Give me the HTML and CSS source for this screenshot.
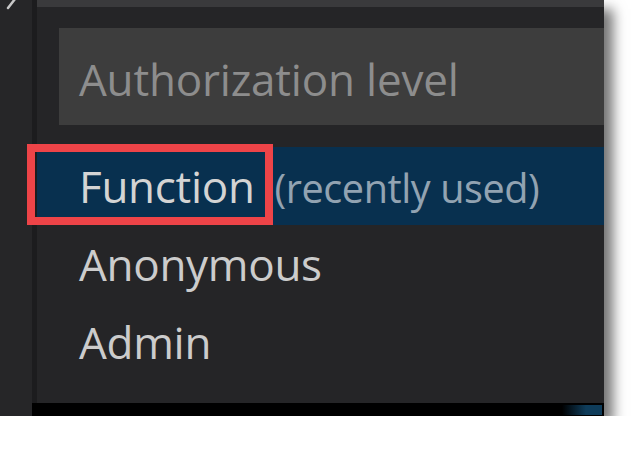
FILE: index.html
```html
<!DOCTYPE html>
<html>
<head>
<meta charset="utf-8">
<link rel="stylesheet" href="styles.css">
</head>
<body>
<div class="shot">
  <div class="editor">
    <svg class="glyph" width="20" height="10" viewBox="0 0 20 10"><line x1="15" y1="-1" x2="8" y2="8" stroke="#c8c8c8" stroke-width="2.5" stroke-linecap="round"/></svg>
  </div>
  <div class="right">
    <div class="main">
      <div class="edge"></div>
      <div class="widget">
        <div class="topbar"></div>
        <div class="body">
          <div class="input">Authorization level</div>
          <ul class="list">
            <li class="item active"><span class="label">Function</span><span class="desc">(recently used)</span></li>
            <li class="item"><span class="label">Anonymous</span></li>
            <li class="item"><span class="label">Admin</span></li>
          </ul>
        </div>
      </div>
    </div>
    <div class="statusbar"><div class="blue"></div></div>
  </div>
  <div class="highlight"></div>
</div>
</body>
</html>
```
FILE: styles.css
```css
html, body {
  margin: 0;
  padding: 0;
  background: #ffffff;
}
.shot {
  position: relative;
  width: 604px;
  height: 416px;
  display: flex;
  background: #262628;
  box-shadow: 9px 9px 12px rgba(0, 0, 0, 0.55);
  font-family: "Open Sans", "Noto Sans", sans-serif;
}
.editor {
  width: 32px;
  flex: none;
  background: #262628;
  position: relative;
}
.glyph {
  position: absolute;
  left: 0;
  top: 0;
}
.right {
  flex: 1;
  display: flex;
  flex-direction: column;
}
.main {
  flex: 1;
  display: flex;
}
.edge {
  width: 5px;
  background: #1c1c1e;
}
.widget {
  flex: 1;
  display: flex;
  flex-direction: column;
  background: #252527;
}
.topbar {
  height: 7px;
  background: #3a3a3c;
}
.body {
  flex: 1;
  padding: 21px 0 0 22px;
}
.input {
  height: 91px;
  line-height: 91px;
  padding-top: 6px;
  background: #3d3d3d;
  color: #8d8d8d;
  font-size: 44px;
  letter-spacing: -0.2px;
  padding-left: 20px;
  white-space: nowrap;
}
.list {
  list-style: none;
  margin: 22px 0 0 -22px;
  padding: 0;
}
.item {
  height: 78px;
  line-height: 78px;
  padding-left: 42px;
  color: #cccccc;
  font-size: 44px;
  white-space: nowrap;
}
.item .label {
  letter-spacing: -0.3px;
}
.item.active {
  background: #08304f;
  color: #d4d4d4;
}
.desc {
  font-size: 0.9em;
  margin-left: 0.5em;
  letter-spacing: -0.4px;
  opacity: 0.72;
  color: #c8d0d8;
}
.statusbar {
  height: 13px;
  background: #000000;
  position: relative;
}
.blue {
  position: absolute;
  right: 2px;
  top: 2px;
  width: 40px;
  height: 10px;
  background: linear-gradient(90deg, rgba(14, 60, 90, 0), #0e3c5a 60%);
}
.highlight {
  position: absolute;
  left: 27px;
  top: 144px;
  width: 230px;
  height: 65px;
  border: 8px solid #ee4448;
}
```
